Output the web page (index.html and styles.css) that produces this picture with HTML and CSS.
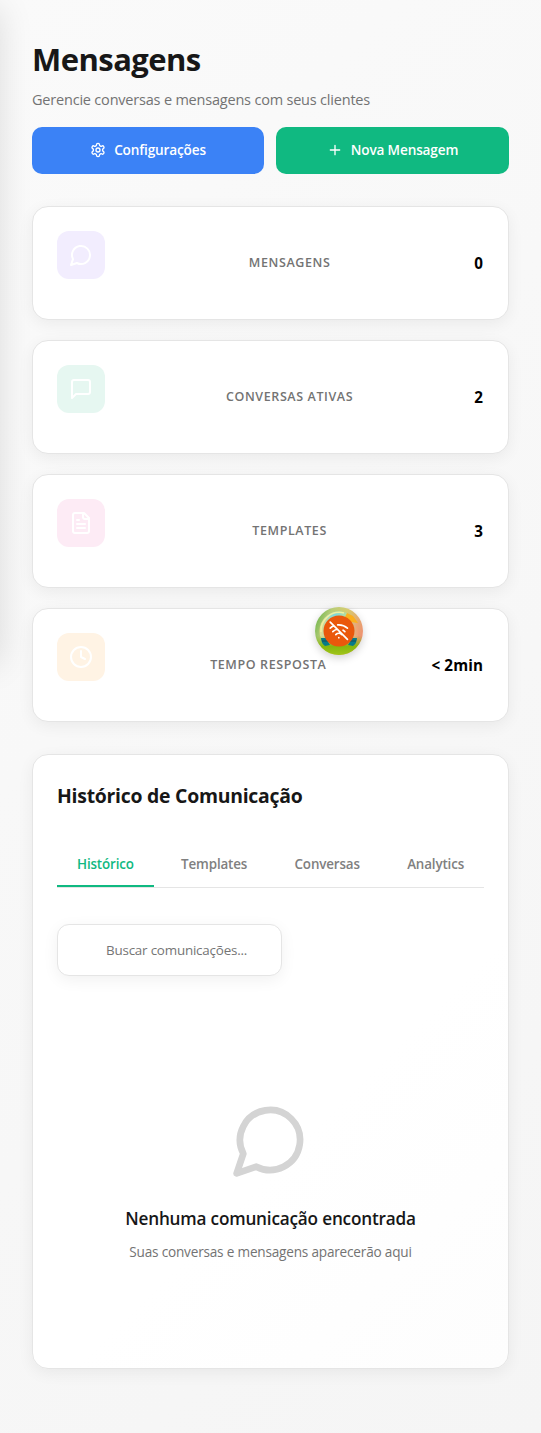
FILE: index.html
```html
<!DOCTYPE html>
<html lang="pt-BR">
<head>
<meta charset="utf-8">
<meta name="viewport" content="width=device-width, initial-scale=1">
<title>Mensagens</title>
<link rel="stylesheet" href="styles.css">
</head>
<body>
<aside class="sidebar"></aside>
<main class="page">
  <header class="header">
    <h1 class="title">Mensagens</h1>
    <p class="subtitle">Gerencie conversas e mensagens com seus clientes</p>
    <div class="actions">
      <button class="btn btn-blue">
        <svg class="icon" width="16" height="16" viewBox="0 0 24 24"><path d="M12.22 2h-.44a2 2 0 0 0-2 2v.18a2 2 0 0 1-1 1.73l-.43.25a2 2 0 0 1-2 0l-.15-.08a2 2 0 0 0-2.73.73l-.22.38a2 2 0 0 0 .73 2.73l.15.1a2 2 0 0 1 1 1.72v.51a2 2 0 0 1-1 1.74l-.15.09a2 2 0 0 0-.73 2.73l.22.38a2 2 0 0 0 2.73.73l.15-.08a2 2 0 0 1 2 0l.43.25a2 2 0 0 1 1 1.73V20a2 2 0 0 0 2 2h.44a2 2 0 0 0 2-2v-.18a2 2 0 0 1 1-1.73l.43-.25a2 2 0 0 1 2 0l.15.08a2 2 0 0 0 2.73-.73l.22-.39a2 2 0 0 0-.73-2.73l-.15-.08a2 2 0 0 1-1-1.74v-.5a2 2 0 0 1 1-1.74l.15-.09a2 2 0 0 0 .73-2.73l-.22-.38a2 2 0 0 0-2.73-.73l-.15.08a2 2 0 0 1-2 0l-.43-.25a2 2 0 0 1-1-1.73V4a2 2 0 0 0-2-2z"/><circle cx="12" cy="12" r="3"/></svg>
        <span>Configurações</span>
      </button>
      <button class="btn btn-green">
        <svg class="icon" width="16" height="16" viewBox="0 0 24 24"><path d="M5 12h14M12 5v14"/></svg>
        <span>Nova Mensagem</span>
      </button>
    </div>
  </header>

  <section class="stats">
    <article class="card stat">
      <div class="tile tile-violet"><svg class="icon" width="24" height="24" viewBox="0 0 24 24"><path d="M7.9 20A9 9 0 1 0 4 16.1L2 22Z"/></svg></div>
      <span class="label">MENSAGENS</span><strong class="value">0</strong>
    </article>
    <article class="card stat">
      <div class="tile tile-green"><svg class="icon" width="24" height="24" viewBox="0 0 24 24"><path d="M21 15a2 2 0 0 1-2 2H7l-4 4V5a2 2 0 0 1 2-2h14a2 2 0 0 1 2 2z"/></svg></div>
      <span class="label">CONVERSAS ATIVAS</span><strong class="value">2</strong>
    </article>
    <article class="card stat">
      <div class="tile tile-pink"><svg class="icon" width="24" height="24" viewBox="0 0 24 24"><path d="M15 2H6a2 2 0 0 0-2 2v16a2 2 0 0 0 2 2h12a2 2 0 0 0 2-2V7Z"/><path d="M14 2v4a2 2 0 0 0 2 2h4M10 9H8M16 13H8M16 17H8"/></svg></div>
      <span class="label">TEMPLATES</span><strong class="value">3</strong>
    </article>
    <article class="card stat">
      <div class="tile tile-amber"><svg class="icon" width="24" height="24" viewBox="0 0 24 24"><circle cx="12" cy="12" r="10"/><path d="M12 6v6l4 2"/></svg></div>
      <span class="label">TEMPO RESPOSTA</span><strong class="value">&lt; 2min</strong>
    </article>
  </section>

  <section class="card panel">
    <h2 class="panel-title">Histórico de Comunicação</h2>
    <nav class="tabs">
      <a class="tab active">Histórico</a>
      <a class="tab">Templates</a>
      <a class="tab">Conversas</a>
      <a class="tab">Analytics</a>
    </nav>
    <div class="search">Buscar comunicações...</div>
    <div class="empty">
      <svg class="icon empty-icon" width="80" height="80" viewBox="0 0 24 24"><path d="M7.9 20A9 9 0 1 0 4 16.1L2 22Z"/></svg>
      <h3 class="empty-title">Nenhuma comunicação encontrada</h3>
      <p class="empty-text">Suas conversas e mensagens aparecerão aqui</p>
    </div>
  </section>
</main>

<div class="offline">
  <svg width="48" height="48" viewBox="0 0 48 48">
    <defs>
      <linearGradient id="rim" x1="0" y1="0.3" x2="1" y2="0.7"><stop offset="0" stop-color="#76b852"/><stop offset=".22" stop-color="#b9cd78"/><stop offset=".5" stop-color="#d6cc70"/><stop offset="1" stop-color="#f18c72"/></linearGradient>
      <linearGradient id="base" x1="0" y1="0" x2="0" y2="1"><stop offset=".6" stop-color="#7fb515" stop-opacity="0"/><stop offset=".82" stop-color="#86b70d"/><stop offset="1" stop-color="#a0c51b"/></linearGradient>
      <linearGradient id="sky" x1="0" y1="0" x2="1" y2="0"><stop offset="0" stop-color="#e8dc8c"/><stop offset=".4" stop-color="#7bd8dc"/><stop offset=".7" stop-color="#b9dc9a"/><stop offset="1" stop-color="#f59b70"/></linearGradient>
    </defs>
    <circle cx="24" cy="24" r="24" fill="url(#rim)"/>
    <circle cx="24" cy="24" r="19.5" fill="url(#sky)"/>
    <path d="M6 25A18.500 18.500 0 0 1 29 6" fill="none" stroke="#f0f0a0" stroke-width="1.5"/>
    <path d="M32 6l6 3 5 7-8-1-5-5z" fill="#fbb01d"/>
    <circle cx="24" cy="24" r="24" fill="url(#base)"/>
    <path d="M6 31h5l4 7-5 1q-4-3-4-8zM42 31h-5l-4 7 5 1q4-3 4-8z" fill="#087b88"/>
    <path d="M7 34h6M35 34h6" stroke="#174b58" stroke-width="1"/>
    <circle cx="24" cy="24" r="15.5" fill="#ea580c"/>
    <g transform="translate(13.5 13.5) scale(.86)" fill="none" stroke="#fff" stroke-width="2" stroke-linecap="round" stroke-linejoin="round"><path d="M12 20h.01M8.5 16.43a5 5 0 0 1 7 0M5 12.86a10 10 0 0 1 5.17-2.69M19 12.86a10 10 0 0 0-2.01-1.52M2 8.82a15 15 0 0 1 4.18-2.64M22 8.82a15 15 0 0 0-11.29-3.76M2 2l20 20"/></g>
  </svg>
</div>
</body>
</html>
```
FILE: styles.css
```css
* { box-sizing: border-box; margin: 0; }
body {
  position: relative;
  min-height: 1433px;
  overflow-x: hidden;
  background: linear-gradient(135deg, #fafafa, #f5f5f5);
  color: #171717;
  font-family: "Open Sans", "Noto Sans", sans-serif;
}
.sidebar {
  position: absolute;
  left: -280px;
  top: 0;
  width: 280px;
  height: 656px;
  box-shadow: 0 8px 32px rgba(0, 0, 0, .12);
}
.page { padding: 37px 32px 64px; }
.icon { flex: none; fill: none; stroke: currentColor; stroke-width: 2; stroke-linecap: round; stroke-linejoin: round; }
.title { font-size: 31px; line-height: 44px; font-weight: 700; letter-spacing: -.55px; }
.subtitle { margin-top: 7px; font-size: 14.5px; line-height: 24px; color: #737373; letter-spacing: -.2px; }
.actions { display: grid; grid-template-columns: 232px 1fr; gap: 12px; margin-top: 15px; }
.btn {
  display: flex; align-items: center; justify-content: center; gap: 8px;
  height: 47px; padding: 0 0 2px; border: 0; border-radius: 10px;
  color: #fff; font: 600 13.6px "Open Sans", "Noto Sans", sans-serif; letter-spacing: -.15px;
}
.btn-blue { background: #3b82f6; }
.btn-green { background: #10b981; }
.stats { display: grid; gap: 20px; margin: 32px 0; }
.card {
  border: 1px solid #e5e5e5; border-radius: 16px; background: #fff;
  box-shadow: 0 4px 16px rgba(0, 0, 0, .06);
}
.stat { display: flex; align-items: center; justify-content: space-between; height: 114px; padding: 24px; }
.tile { display: grid; place-items: center; width: 48px; height: 48px; margin-bottom: 16px; border-radius: 12px; color: #fff; }
.tile-violet { background: #f2edfe; }
.tile-green { background: #e6f7f1; }
.tile-pink { background: #fdebf5; }
.tile-amber { background: #fff3e4; }
.label { padding-bottom: 2px; font-size: 12.5px; font-weight: 600; color: #737373; letter-spacing: .6px; }
.value { padding-right: 1px; font-size: 15.2px; font-weight: 700; color: #000; letter-spacing: .1px; }
.panel { height: 615px; padding: 24px; background: linear-gradient(135deg, #fff 60%, #fdfdfd); }
.panel-title { font-size: 19.4px; line-height: 34px; font-weight: 700; letter-spacing: -.25px; }
.tabs { display: flex; justify-content: space-between; height: 49px; margin-top: 26px; border-bottom: 1px solid #e5e5e5; margin-bottom: 36px; }
.tab { padding: 14px 20px 0; font-size: 13.4px; line-height: 22px; font-weight: 600; color: #808080; letter-spacing: -.15px; }
.active { border-bottom: 2px solid #10b981; color: #10b981; }
.search {
  display: flex; align-items: center; width: 225px; height: 52px; padding-left: 48px;
  border: 1px solid #e5e5e5; border-radius: 12px; background: #fff;
  box-shadow: 0 4px 16px rgba(0, 0, 0, .06);
  color: #757575; font-size: 13.4px; letter-spacing: -.2px;
}
.empty { display: flex; flex-direction: column; align-items: center; padding-top: 124px; color: #d4d4d4; }
.empty-icon { margin-right: 2px; }
.empty-title { margin-top: 25px; font-size: 17.2px; line-height: 28px; font-weight: 600; color: #171717; letter-spacing: -.2px; }
.empty-text { margin-top: 8px; font-size: 13.6px; line-height: 22px; color: #737373; letter-spacing: -.2px; }
.offline { position: absolute; left: 315px; top: 607px; width: 48px; height: 48px; border-radius: 50%; box-shadow: 0 3px 8px rgba(0, 0, 0, .18); }
```
